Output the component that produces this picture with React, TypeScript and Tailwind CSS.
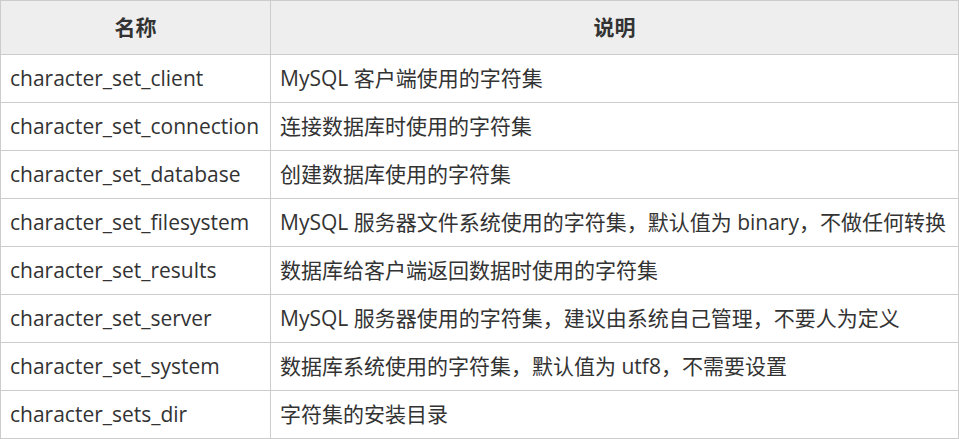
const rows: [string, string][] = [
  ["character_set_client", "MySQL 客户端使用的字符集"],
  ["character_set_connection", "连接数据库时使用的字符集"],
  ["character_set_database", "创建数据库使用的字符集"],
  ["character_set_filesystem", "MySQL 服务器文件系统使用的字符集，默认值为 binary，不做任何转换"],
  ["character_set_results", "数据库给客户端返回数据时使用的字符集"],
  ["character_set_server", "MySQL 服务器使用的字符集，建议由系统自己管理，不要人为定义"],
  ["character_set_system", "数据库系统使用的字符集，默认值为 utf8，不需要设置"],
  ["character_sets_dir", "字符集的安装目录"],
]

export default function App() {
  return (
    <div className="w-[959px] h-[439px] bg-white">
      <div
        className="w-[959px] border-t border-l border-[#cccccc] text-[#333333] text-[21px]"
        style={{ fontFamily: '"Open Sans", "Noto Sans CJK SC", sans-serif' }}
      >
        <div className="grid grid-cols-[270px_688px] bg-[#eeeeee] font-bold">
          <div className="h-[54px] flex items-center justify-center pt-[1px] border-r border-b border-[#cccccc]">名称</div>
          <div className="h-[54px] flex items-center justify-center pt-[1px] border-r border-b border-[#cccccc]">说明</div>
        </div>
        {rows.map(([name, desc]) => (
          <div key={name} className="grid grid-cols-[270px_688px]">
            <div className="h-[48px] flex items-center pl-[9px] pt-[1px] border-r border-b border-[#cccccc] whitespace-nowrap">{name}</div>
            <div className="h-[48px] flex items-center pl-[9px] pt-[1px] border-r border-b border-[#cccccc] whitespace-nowrap">{desc}</div>
          </div>
        ))}
      </div>
    </div>
  )
}
